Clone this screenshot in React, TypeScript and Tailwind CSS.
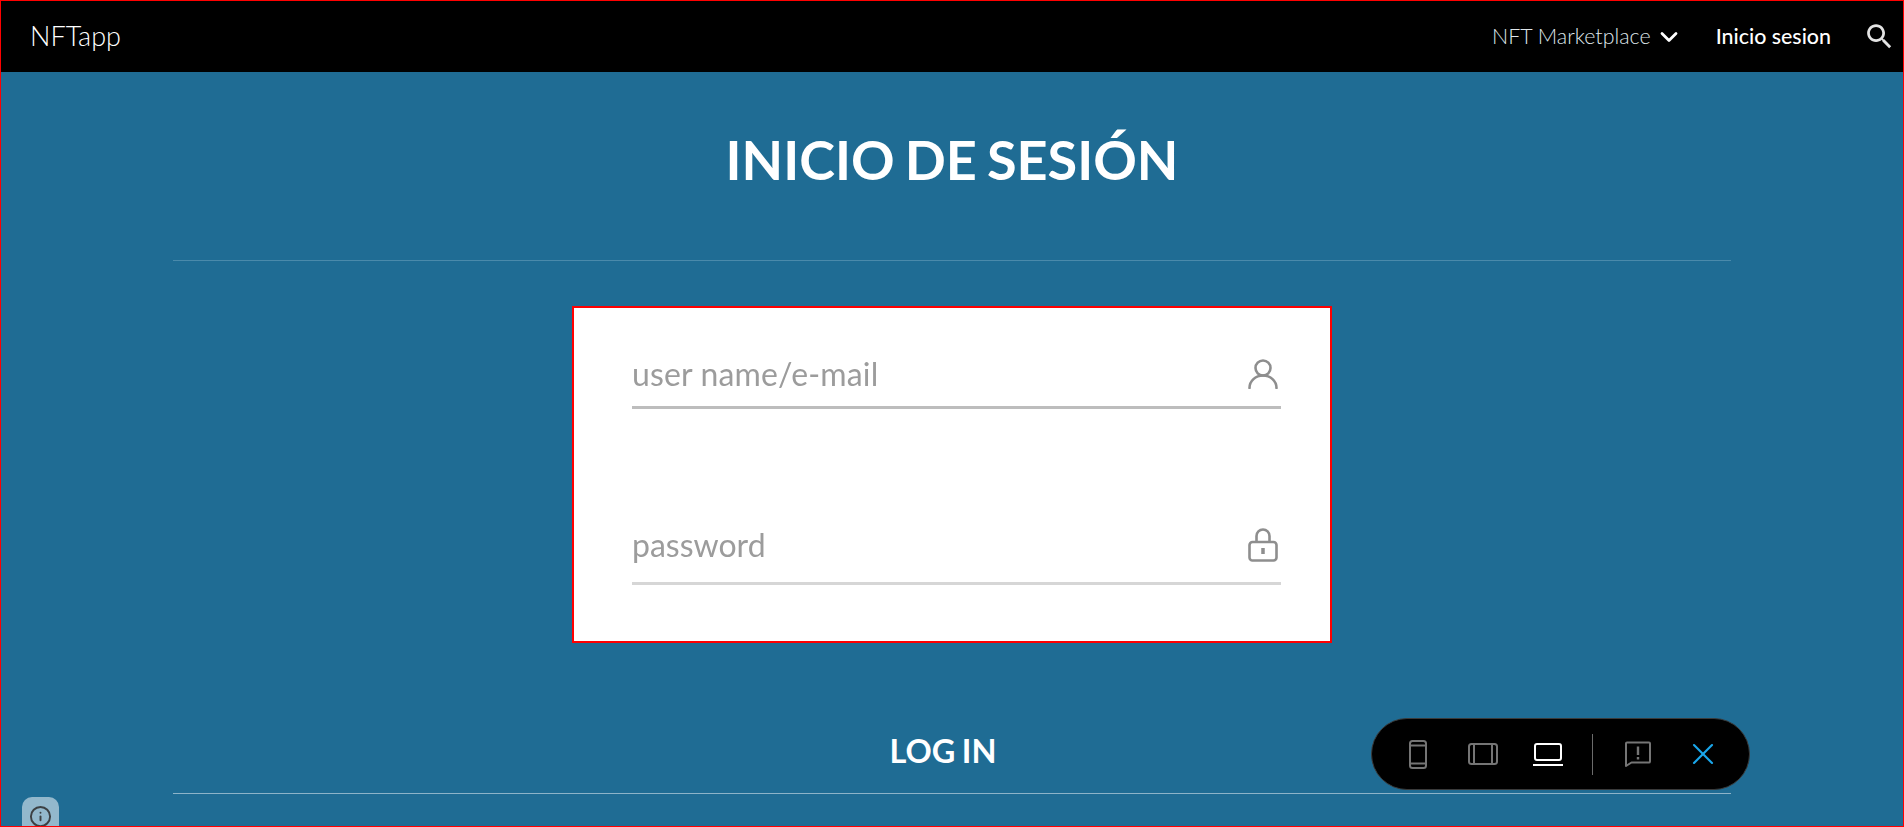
import React from 'react';
import { ChevronDown, X, Info } from 'lucide-react';

function DeviceBar() {
  return (
    <div className="absolute left-[1370px] top-[717px] flex h-[72px] w-[379px] items-center rounded-[36px] border border-[#3a3a3a] bg-black">
      {/* Phone */}
      <svg className="ml-[37px]" width="18" height="29" viewBox="0 0 18 29" fill="none" stroke="#757575" strokeWidth="2">
        <rect x="1" y="1" width="16" height="27" rx="2.5" />
        <path d="M1 5.5h16M1 23.5h16" />
      </svg>
      {/* Tablet */}
      <svg className="ml-[41px]" width="30" height="22" viewBox="0 0 30 22" fill="none" stroke="#757575" strokeWidth="2">
        <rect x="1" y="1" width="28" height="20" rx="2.5" />
        <path d="M6 1v20M24 1v20" />
      </svg>
      {/* Laptop */}
      <svg className="ml-[35px]" width="30" height="23" viewBox="0 0 30 23" fill="none" stroke="#ffffff" strokeWidth="2">
        <rect x="2" y="1" width="26" height="16" rx="2" />
        <path d="M0 22h30" />
      </svg>
      <div className="ml-[29px] h-[41px] w-px bg-[#6b6b6b]" />
      {/* Feedback */}
      <svg className="ml-[32px]" width="26" height="26" viewBox="0 0 26 26" fill="none">
        <path d="M2 1.5h22a1 1 0 0 1 1 1v18a1 1 0 0 1-1 1H6.5L1 25V2.5a1 1 0 0 1 1-1z" stroke="#757575" strokeWidth="2" strokeLinejoin="round" />
        <path d="M13 5.5v8.5M13 16v2.5" stroke="#757575" strokeWidth="2.4" />
      </svg>
      <X className="ml-[34px] text-[#1aa7ec]" size={36} strokeWidth={1.4} />
    </div>
  );
}

export default function App() {
  return (
    <div className="relative flex h-[827px] flex-col overflow-hidden border border-[#ff0000] bg-[#1f6c94] font-['Lato','Liberation_Sans',sans-serif] text-white">
      {/* Header */}
      <header className="flex h-[71px] shrink-0 items-center bg-black pl-[29px] pr-[7px]">
        <span className="text-[27px] font-light">NFTapp</span>
        <nav className="ml-auto flex items-center">
          <span className="text-[21.4px] font-light text-[#dfe6ea]">NFT Marketplace</span>
          <ChevronDown className="ml-[4px]" size={28} strokeWidth={2.4} />
          <span className="ml-[33px] text-[21.4px] font-medium">Inicio sesion</span>
          <svg className="ml-[32px]" width="33" height="33" viewBox="0 0 24 24" fill="#e4e4e4">
            <path d="M15.5 14h-.79l-.28-.27C15.41 12.59 16 11.11 16 9.5 16 5.91 13.09 3 9.5 3S3 5.91 3 9.5 5.91 16 9.5 16c1.61 0 3.09-.59 4.23-1.57l.27.28v.79l5 4.99L20.49 19l-4.99-5zm-6 0C7.01 14 5 11.99 5 9.5S7.01 5 9.5 5 14 7.01 14 9.5 11.99 14 9.5 14z" />
          </svg>
        </nav>
      </header>

      <main className="flex flex-col items-center px-[172px]">
        <h1 className="mt-[40px] h-[96px] text-[54px] leading-[96px] font-bold [word-spacing:-3px]">INICIO DE SESIÓN</h1>
        <div className="mt-[52px] h-px w-full bg-[#4a8aab]" />

        {/* Form picture */}
        <div className="mt-[45px] h-[337px] w-[760px] border-2 border-[#f00] bg-white pl-[58px] pr-[49px] text-[#9c9c9c]">
          <div className="blur-[0.6px]">
            <div className="flex items-center justify-between border-b-[3px] border-[#bdbdbd] pb-[10px] pt-[44px]">
              <span className="text-[32px] leading-[44px] tracking-[0.15px]">user name/e-mail</span>
              <svg className="mr-[3px]" width="30" height="30" viewBox="0 0 30 30" fill="none" stroke="#8e8e8e" strokeWidth="2.6" strokeLinecap="round">
                <circle cx="15" cy="9" r="7.5" />
                <path d="M1.500 29c0-7 6-12.500 13.500-12.500S28.500 22 28.500 29" />
              </svg>
            </div>
            <div className="mt-[114px] flex items-center justify-between border-b-[3px] border-[#d6d6d6] pb-[15px]">
              <span className="text-[32px] leading-[44px]">password</span>
              <svg className="mr-[3px]" width="30" height="34" viewBox="0 0 30 34" fill="none" stroke="#8e8e8e" strokeWidth="2.6">
                <rect x="1.500" y="14" width="27" height="18.500" rx="3" />
                <path d="M8.500 14V8a6.500 6.500 0 0 1 13 0v6" />
                <path d="M15 20v6" strokeWidth="3.500" />
              </svg>
            </div>
          </div>
        </div>

        <div className="mt-[84px] pr-[18px] text-[32.500px] leading-[48px] font-bold [word-spacing:-1.500px]">LOG IN</div>
        <div className="mt-[18px] h-px w-full bg-[#8db4c9]" />
      </main>

      {/* Info badge */}
      <div className="absolute left-[21px] top-[796px] flex h-[50px] w-[37px] justify-center rounded-[10px] bg-[#93b8cc] pt-[8px]">
        <Info className="text-[#3c4043]" size={23} strokeWidth={2} />
      </div>

      <DeviceBar />
    </div>
  );
}
